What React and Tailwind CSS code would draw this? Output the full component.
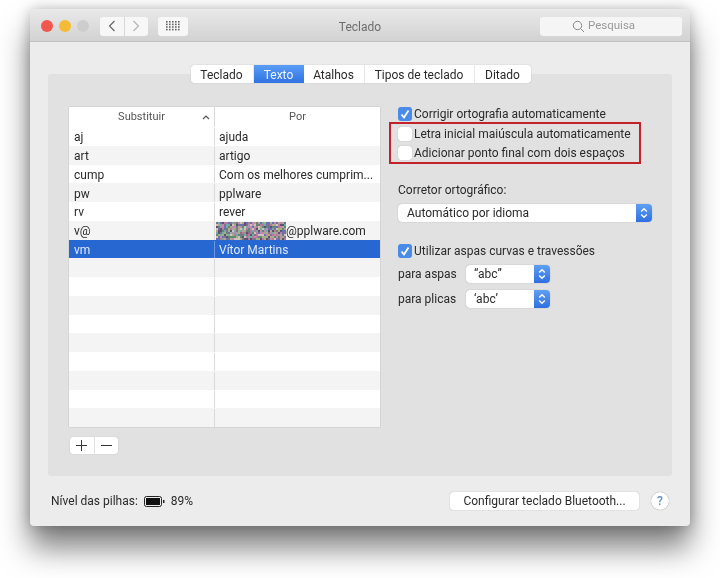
const rows = [
  ['aj', 'ajuda'],
  ['art', 'artigo'],
  ['cump', 'Com os melhores cumprim...'],
  ['pw', 'pplware'],
  ['rv', 'rever'],
  ['v@', '@pplware.com'],
  ['vm', 'Vítor Martins'],
  ['', ''], ['', ''], ['', ''], ['', ''], ['', ''], ['', ''], ['', ''], ['', ''], ['', ''],
];

const tabs = [
  ['Teclado', 'w-[63px]'],
  ['Texto', 'w-[50px]'],
  ['Atalhos', 'w-[61px]'],
  ['Tipos de teclado', 'w-[110px]'],
  ['Ditado', 'w-[56px]'],
];

// pixel noise that hides the address
function Noise() {
  const colors = ['#7f7390', '#b5a58c', '#5f8a72', '#c08ab0', '#6d70b0', '#a0b088', '#cfc2ba', '#5a5470', '#b87a98', '#78a8a8'];
  const cells = [];
  for (let y = 0; y < 9; y++) {
    for (let x = 0; x < 35; x++) {
      const h = Math.abs(Math.sin(x * 12.9898 + y * 78.233) * 43758.5453);
      const c = colors[Math.floor(h) % colors.length];
      cells.push(<rect key={`${x}-${y}`} x={x * 2} y={y * 2} width="2" height="2" fill={c} />);
    }
  }
  return (
    <svg width="70" height="18" className="shrink-0">
      {cells}
    </svg>
  );
}

function Check({ on, label }) {
  return (
    <div className="flex items-center h-[19px] gap-[2px]">
      {on ? (
        <svg width="14" height="14" viewBox="0 0 14 14" className="shrink-0">
          <rect width="14" height="14" rx="3" fill="#4a8ae8" />
          <path d="M3.5 7.5 L6 10.5 L10.5 3.5" fill="none" stroke="#fff" strokeWidth="1.8" />
        </svg>
      ) : (
        <div className="w-[14px] h-[14px] shrink-0 rounded-[3px] bg-white shadow-[0_0_1px_rgba(0,0,0,0.35)]" />
      )}
      <span className="whitespace-nowrap">{label}</span>
    </div>
  );
}

function Stepper() {
  return (
    <div className="w-[16px] self-stretch rounded-r-[4px] bg-gradient-to-b from-[#5f9ff2] to-[#2f6fe0] flex items-center justify-center shrink-0">
      <svg width="8" height="12" viewBox="0 0 8 12">
        <path d="M1.2 4.5 L4 1.8 L6.8 4.5 M1.2 7.5 L4 10.2 L6.8 7.5" fill="none" stroke="#fff" strokeWidth="1.4" />
      </svg>
    </div>
  );
}

function Select({ label, className }) {
  return (
    <div className={`flex items-center h-[18px] bg-white rounded-[4px] shadow-[0_0_1px_rgba(0,0,0,0.4)] ${className}`}>
      <span className="flex-1 truncate">{label}</span>
      <Stepper />
    </div>
  );
}

export default function App() {
  return (
    <div className="w-[720px] h-[578px] bg-white overflow-hidden pt-[9px] pl-[30px] text-[12px] text-[#2a2a2a] font-['Roboto',sans-serif] blur-[0.35px]">
      <div className="w-[660px] h-[517px] flex flex-col bg-[#ececec] rounded-[4px] shadow-[0_22px_30px_rgba(0,0,0,0.5),0_0_14px_rgba(0,0,0,0.25)]">
        <header className="h-[33px] shrink-0 flex items-center pt-[2px] pl-[11px] pr-[8px] rounded-t-[4px] bg-gradient-to-b from-[#e9e9e9] to-[#d2d2d2] border-b border-[#c2c2c2]">
          <div className="w-[12px] h-[12px] rounded-full bg-[#f0584f]" />
          <div className="w-[12px] h-[12px] rounded-full bg-[#f5bb36] ml-[6px]" />
          <div className="w-[12px] h-[12px] rounded-full bg-[#cdcdcd] ml-[6px]" />
          <div className="flex ml-[11px] h-[19px] w-[48px] rounded-[3px] bg-[#f7f7f7] divide-x divide-[#d8d8d8]">
            <div className="flex-1 flex items-center justify-center">
              <svg width="8" height="12" viewBox="0 0 8 12"><path d="M6.5 1 L1.5 6 L6.5 11" fill="none" stroke="#666" strokeWidth="1.2" /></svg>
            </div>
            <div className="flex-1 flex items-center justify-center">
              <svg width="8" height="12" viewBox="0 0 8 12"><path d="M1.5 1 L6.5 6 L1.5 11" fill="none" stroke="#b5b5b5" strokeWidth="1.2" /></svg>
            </div>
          </div>
          <div className="ml-[10px] h-[19px] w-[30px] rounded-[3px] bg-[#f7f7f7] flex items-center justify-center">
            <svg width="14" height="10" viewBox="0 0 14 10" fill="#666">
              {[0, 1, 2, 3].flatMap((r) => [0, 1, 2, 3, 4].map((c) => <rect key={`${r}${c}`} x={c * 3} y={r * 2.6} width="1.6" height="1.6" />))}
            </svg>
          </div>
          <div className="flex-1 text-center text-[#6e6e6e] pr-[8px] pt-[1px]">Teclado</div>
          <div className="w-[142px] h-[19px] rounded-[3px] bg-[#f5f5f5] flex items-center pl-[32px] gap-[3px] text-[#9a9a9a] text-[11.5px]">
            <svg width="13" height="13" viewBox="0 0 13 13" fill="none" stroke="#888" strokeWidth="1">
              <circle cx="5.5" cy="5.5" r="4.2" /><path d="M8.6 8.6 L12 12" />
            </svg>
            Pesquisa
          </div>
        </header>

        <main className="flex-1 px-[18px] pt-[32px]">
          <div className="h-[402px] bg-[#e1e1e1] rounded-[3px]">
            <nav className="-translate-y-[9px] h-[18px] flex justify-center">
              <div className="flex bg-white rounded-[3px] shadow-[0_0_1px_rgba(0,0,0,0.35)] ml-[1px]">
                {tabs.map(([t, w]) => (
                  <div key={t} className={`${w} pt-[1px] flex items-center justify-center ${t === 'Texto' ? 'bg-gradient-to-b from-[#5a9df5] to-[#2f72e2] text-white/90' : 'border-r border-[#e8e8e8] last:border-r-0'}`}>
                    {t}
                  </div>
                ))}
              </div>
            </nav>

            <div className="flex pl-[21px] pt-[15px]">
              <div className="w-[311px]">
                <div className="h-[320px] bg-white shadow-[0_0_1px_rgba(0,0,0,0.3)]">
                  <div className="h-[20px] flex text-[11px] text-[#555]">
                    <div className="w-[146px] flex items-center justify-center relative border-r border-[#d9d9d9]">
                      Substituir
                      <svg width="8" height="5" viewBox="0 0 8 5" className="absolute right-[4px] top-[8px]"><path d="M1 4 L4 1 L7 4" fill="none" stroke="#555" strokeWidth="1.2" /></svg>
                    </div>
                    <div className="flex-1 flex items-center justify-center">Por</div>
                  </div>
                  {rows.map(([a, b], i) => (
                    <div key={i} className={`h-[18.75px] pt-[1px] flex items-center ${i === 6 ? 'bg-[#2767d1] text-[#dfe9fa]' : i % 2 ? 'bg-[#f4f4f4]' : 'bg-white'}`}>
                      <div className={`w-[146px] h-full flex items-center pl-[5px] pt-[1px] border-r ${i === 6 ? 'border-[#6c97dd]' : 'border-[#d9d9d9]'}`}>{a}</div>
                      <div className="flex-1 h-full flex items-center pl-[4px] pt-[1px] whitespace-nowrap">
                        {i === 5 && <div className="-ml-[3px]"><Noise /></div>}
                        {b}
                      </div>
                    </div>
                  ))}
                </div>
                <div className="mt-[10px] ml-[1px] w-[48px] h-[17px] flex bg-white rounded-[3px] shadow-[0_0_1px_rgba(0,0,0,0.25)] divide-x divide-[#e2e2e2]">
                  <div className="flex-1 flex items-center justify-center">
                    <svg width="11" height="11" viewBox="0 0 11 11"><path d="M5.5 0 V11 M0 5.5 H11" stroke="#333" strokeWidth="1" /></svg>
                  </div>
                  <div className="flex-1 flex items-center justify-center">
                    <svg width="11" height="11" viewBox="0 0 11 11"><path d="M0 5.5 H11" stroke="#333" strokeWidth="1" /></svg>
                  </div>
                </div>
              </div>

              <div className="ml-[18px] w-[254px] -mt-[3px]">
                <Check on label="Corrigir ortografia automaticamente" />
                <div className="-ml-[9px] w-[252px] pl-[7px] border-2 border-[#c4222a] -mt-[1px]">
                  <Check label="Letra inicial maiúscula automaticamente" />
                  <Check label="Adicionar ponto final com dois espaços" />
                </div>
                <div className="mt-[18px] h-[16px] leading-[16px]">Corretor ortográfico:</div>
                <Select label="Automático por idioma" className="mt-[6px] pl-[9px] w-[254px]" />
                <div className="mt-[19px]">
                  <Check on label="Utilizar aspas curvas e travessões" />
                </div>
                <div className="flex items-center mt-[5px] h-[18px]">
                  <span className="w-[68px]">para aspas</span>
                  <Select label="“abc”" className="w-[84px] pl-[8px]" />
                </div>
                <div className="flex items-center mt-[7px] h-[18px]">
                  <span className="w-[68px]">para plicas</span>
                  <Select label="‘abc’" className="w-[84px] pl-[8px]" />
                </div>
              </div>
            </div>
          </div>

          <footer className="flex items-center mt-[16px] h-[18px] pl-[3px]">
            <span>Nível das pilhas:</span>
            <svg width="21" height="11" viewBox="0 0 21 11" className="ml-[6px]">
              <rect x="0.5" y="0.5" width="17" height="10" rx="2" fill="none" stroke="#222" />
              <rect x="2" y="2" width="14" height="7" fill="#111" />
              <rect x="19" y="4" width="1.5" height="3" fill="#222" />
            </svg>
            <span className="ml-[6px]">89%</span>
            <div className="ml-auto w-[189px] h-[18px] bg-white rounded-[3px] shadow-[0_0_1px_rgba(0,0,0,0.4)] flex items-center justify-center">
              Configurar teclado Bluetooth...
            </div>
            <div className="ml-[12px] mr-[3px] w-[18px] h-[18px] rounded-full bg-white shadow-[0_0_1px_rgba(0,0,0,0.5)] flex items-center justify-center text-[#5f8fc9] font-medium">?</div>
          </footer>
        </main>
      </div>
    </div>
  );
}
